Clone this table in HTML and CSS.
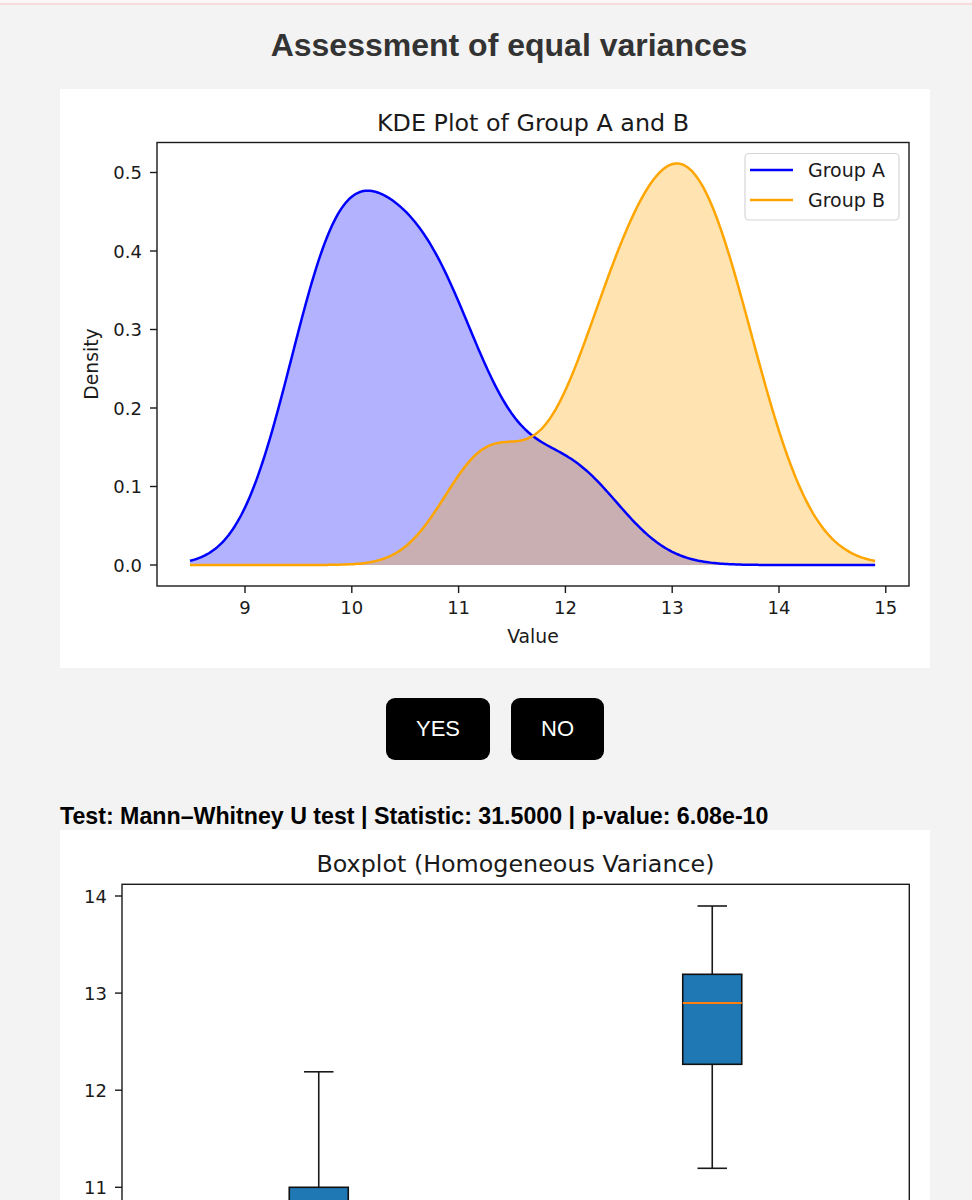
FILE: index.html
```html
<!DOCTYPE html>
<html lang="en">
<head>
<meta charset="utf-8">
<title>Assessment of equal variances</title>
<link rel="stylesheet" href="styles.css">
</head>
<body>
<div class="topbar"></div>
<main class="page">
  <h2 class="page-title">Assessment of equal variances</h2>

  <section class="plot-card kde-card">
    <svg class="plot" width="870" height="579" viewBox="60 89 870 579" xmlns="http://www.w3.org/2000/svg">
      <text class="plot-title" x="533" y="131">KDE Plot of Group A and B</text>

      <path id="fillA" class="fill-a" d=""/>
      <path id="fillB" class="fill-b" d=""/>
      <path id="lineA" class="line-a" d=""/>
      <path id="lineB" class="line-b" d=""/>

      <rect class="frame" x="157" y="142.5" width="752" height="443.5"/>

      <g class="ticks">
        <line x1="150" y1="565" x2="157" y2="565"/>
        <line x1="150" y1="486.5" x2="157" y2="486.5"/>
        <line x1="150" y1="408" x2="157" y2="408"/>
        <line x1="150" y1="329.5" x2="157" y2="329.5"/>
        <line x1="150" y1="251" x2="157" y2="251"/>
        <line x1="150" y1="172.5" x2="157" y2="172.5"/>
        <line x1="245" y1="586" x2="245" y2="593"/>
        <line x1="351.8" y1="586" x2="351.8" y2="593"/>
        <line x1="458.6" y1="586" x2="458.6" y2="593"/>
        <line x1="565.4" y1="586" x2="565.4" y2="593"/>
        <line x1="672.2" y1="586" x2="672.2" y2="593"/>
        <line x1="779" y1="586" x2="779" y2="593"/>
        <line x1="885.8" y1="586" x2="885.8" y2="593"/>
      </g>
      <g class="tick-label ytl">
        <text x="142" y="571.5">0.0</text>
        <text x="142" y="493">0.1</text>
        <text x="142" y="414.5">0.2</text>
        <text x="142" y="336">0.3</text>
        <text x="142" y="257.5">0.4</text>
        <text x="142" y="179">0.5</text>
      </g>
      <g class="tick-label xtl">
        <text x="245" y="614">9</text>
        <text x="351.8" y="614">10</text>
        <text x="458.6" y="614">11</text>
        <text x="565.4" y="614">12</text>
        <text x="672.2" y="614">13</text>
        <text x="779" y="614">14</text>
        <text x="885.8" y="614">15</text>
      </g>
      <text class="axis-label" x="533" y="643">Value</text>
      <text class="axis-label" transform="translate(98 364) rotate(-90)">Density</text>

      <g class="legend">
        <rect class="legend-box" x="745" y="153.5" width="154" height="66.5" rx="4"/>
        <line class="line-a" x1="750" y1="170" x2="793" y2="170"/>
        <line class="line-b" x1="750" y1="200" x2="793" y2="200"/>
        <text class="legend-text" x="808" y="177">Group A</text>
        <text class="legend-text" x="808" y="207">Group B</text>
      </g>
    </svg>
  </section>

  <div class="choices">
    <button class="choice" type="button">YES</button>
    <button class="choice" type="button">NO</button>
  </div>

  <p class="stats">Test: Mann–Whitney U test | Statistic: 31.5000 | p-value: 6.08e-10</p>

  <section class="plot-card box-card">
    <svg class="plot" width="870" height="370" viewBox="60 830 870 370" xmlns="http://www.w3.org/2000/svg">
      <text class="plot-title" x="515.5" y="872.3">Boxplot (Homogeneous Variance)</text>

      <g class="whisker">
        <line x1="318.75" y1="1187.3" x2="318.75" y2="1071.8"/>
        <line x1="304" y1="1071.8" x2="333.5" y2="1071.8"/>
        <line x1="712.25" y1="974.3" x2="712.25" y2="906"/>
        <line x1="697.5" y1="906" x2="727" y2="906"/>
        <line x1="712.25" y1="1064.3" x2="712.25" y2="1168.3"/>
        <line x1="697.5" y1="1168.3" x2="727" y2="1168.3"/>
      </g>
      <rect class="box" x="289.25" y="1187.3" width="59" height="77.7"/>
      <rect class="box" x="682.75" y="974.3" width="59" height="90"/>
      <line class="median" x1="682.75" y1="1003" x2="741.75" y2="1003"/>

      <rect class="frame" x="122" y="884.3" width="787.3" height="442.7"/>

      <g class="ticks">
        <line x1="115" y1="896" x2="122" y2="896"/>
        <line x1="115" y1="993.1" x2="122" y2="993.1"/>
        <line x1="115" y1="1090.2" x2="122" y2="1090.2"/>
        <line x1="115" y1="1187.3" x2="122" y2="1187.3"/>
      </g>
      <g class="tick-label ytl">
        <text x="107" y="902.5">14</text>
        <text x="107" y="999.6">13</text>
        <text x="107" y="1096.7">12</text>
        <text x="107" y="1193.8">11</text>
      </g>
    </svg>
  </section>
</main>
<script src="script.js"></script>
</body>
</html>
```

FILE: styles.css
```css
html, body {
  margin: 0;
  padding: 0;
}

body {
  background: #f3f3f3;
  font-family: "Liberation Sans", Arial, sans-serif;
  color: #000;
}

.topbar {
  height: 3px;
  background: #fdf6f6;
  border-bottom: 2px solid #f7dcdc;
}

.page {
  padding: 0 42px 0 60px;
}

.page-title {
  margin: 22px 0 25px;
  padding-left: 28px;
  font-size: 32px;
  line-height: 37px;
  font-weight: bold;
  text-align: center;
  color: #333;
}

.plot-card {
  background: #fff;
}

.kde-card {
  height: 579px;
}

.box-card {
  height: 370px;
  margin-top: 2px;
}

.plot {
  display: block;
}

.plot-title {
  font-family: "DejaVu Sans", sans-serif;
  font-size: 23.8px;
  fill: #1a1a1a;
  text-anchor: middle;
}

.axis-label {
  font-family: "DejaVu Sans", sans-serif;
  font-size: 18.8px;
  fill: #1a1a1a;
  text-anchor: middle;
}

.tick-label {
  font-family: "DejaVu Sans", sans-serif;
  font-size: 18px;
  fill: #1a1a1a;
}

.ytl {
  text-anchor: end;
}

.xtl {
  text-anchor: middle;
}

.legend-text {
  font-family: "DejaVu Sans", sans-serif;
  font-size: 19px;
  fill: #1a1a1a;
}

.frame {
  fill: none;
  stroke: #1a1a1a;
  stroke-width: 1.4;
}

.ticks line {
  stroke: #1a1a1a;
  stroke-width: 1.4;
}

.fill-a {
  fill: #0000ff;
  fill-opacity: 0.3;
}

.fill-b {
  fill: #ffa500;
  fill-opacity: 0.3;
}

.line-a {
  fill: none;
  stroke: #0000ff;
  stroke-width: 2.5;
  stroke-linejoin: round;
}

.line-b {
  fill: none;
  stroke: #ffa500;
  stroke-width: 2.5;
  stroke-linejoin: round;
}

.legend-box {
  fill: #fff;
  fill-opacity: 0.8;
  stroke: #d6d6d6;
  stroke-width: 1.2;
}

.box {
  fill: #1f77b4;
  stroke: #111;
  stroke-width: 1.6;
}

.median {
  stroke: #ff7f0e;
  stroke-width: 1.8;
}

.whisker line {
  stroke: #1a1a1a;
  stroke-width: 1.6;
}

.choices {
  display: flex;
  justify-content: center;
  gap: 21px;
  margin-top: 30px;
}

.choice {
  background: #000;
  color: #fff;
  border: 0;
  border-radius: 9px;
  padding: 18px 30px;
  font-family: "Liberation Sans", Arial, sans-serif;
  font-size: 22px;
  line-height: 26px;
  cursor: pointer;
}

.stats {
  margin: 44px 0 0;
  font-size: 23.2px;
  line-height: 24px;
  font-weight: bold;
  color: #000;
}
```

FILE: script.js
```javascript
(function () {
  // axis mapping (page pixels)
  var X0 = 245, XS = 106.8;   // x = X0 + (v - 9) * XS
  var Y0 = 565, YS = 785;     // y = Y0 - d * YS
  var V_MIN = 8.485, V_MAX = 14.9;

  // points read off the reference curves, in pixels
  var pixA = [
    [190, 560], [206.7, 550], [226.7, 533], [246.7, 503], [260, 470],
    [273.3, 430], [286.7, 380], [300, 325], [313.3, 277], [326.7, 233],
    [343.3, 206], [368.3, 195], [393, 201], [415, 218], [440, 262],
    [463.3, 315], [480, 355], [496.7, 386], [513.3, 413], [530, 434],
    [546.7, 446.7], [563.3, 455], [583.3, 468], [610, 493], [633.3, 520],
    [656.7, 543], [676.7, 556], [700, 562.5], [733, 564.3], [800, 564.6],
    [875, 564.7]
  ];

  var pixB = [
    [190, 564.7], [300, 564.6], [350, 563.3], [380, 558.3], [406.7, 543.3],
    [430, 520], [450, 490], [463.3, 468.3], [480, 450], [496.7, 443.3],
    [516.7, 441.7], [530, 436.7], [543.3, 426.7], [556.7, 410], [570, 380],
    [583.3, 343.3], [596.7, 306.7], [611.7, 270], [640, 203.3], [656.7, 173.3],
    [673.3, 162.7], [690, 170], [710, 203.3], [733.3, 266.7], [763.3, 380],
    [776.7, 423.3], [793.3, 470], [810, 506.7], [826.7, 533.3], [846.7, 553.3],
    [875, 562.7]
  ];

  function toData(pix) {
    return pix.map(function (p) {
      return [9 + (p[0] - X0) / XS, (Y0 - p[1]) / YS];
    });
  }

  function model(p, v) {
    var s = 0;
    for (var k = 0; k < p.length; k += 3) {
      var z = (v - p[k]) / p[k + 1];
      s += p[k + 2] * Math.exp(-0.5 * z * z);
    }
    return s;
  }

  function loss(p, data) {
    var L = 0;
    for (var i = 0; i < data.length; i++) {
      var e = model(p, data[i][0]) - data[i][1];
      L += e * e;
    }
    for (var k = 0; k < p.length; k += 3) {
      if (p[k + 1] < 0.15 || p[k + 2] < 0) L += 1e3;
    }
    return L;
  }

  function fit(p, data) {
    var step = p.map(function (x, i) { return i % 3 === 2 ? 0.02 : 0.05; });
    var best = loss(p, data);
    for (var it = 0; it < 20000; it++) {
      var improved = false;
      for (var i = 0; i < p.length; i++) {
        for (var s = -1; s <= 1; s += 2) {
          var q = p.slice();
          q[i] += s * step[i];
          var l = loss(q, data);
          if (l < best) { best = l; p = q; improved = true; break; }
        }
      }
      if (!improved) {
        step = step.map(function (x) { return x / 2; });
        if (step[0] < 1e-6) break;
      }
    }
    return p;
  }

  function curve(p) {
    var pts = [];
    var n = 320;
    for (var i = 0; i <= n; i++) {
      var v = V_MIN + (V_MAX - V_MIN) * i / n;
      var d = Math.max(0, model(p, v));
      pts.push([X0 + (v - 9) * XS, Y0 - d * YS]);
    }
    return pts;
  }

  function line(pts) {
    return pts.map(function (p, i) {
      return (i ? 'L' : 'M') + p[0].toFixed(2) + ',' + p[1].toFixed(2);
    }).join(' ');
  }

  function area(pts) {
    var last = pts[pts.length - 1];
    return line(pts) + ' L' + last[0].toFixed(2) + ',' + Y0 + ' L' + pts[0][0].toFixed(2) + ',' + Y0 + ' Z';
  }

  var pA = fit([10.05, 0.55, 0.40, 10.9, 0.5, 0.15, 12.0, 0.47, 0.13], toData(pixA));
  var pB = fit([13.0, 0.45, 0.5, 11.35, 0.35, 0.14, 12.3, 0.4, 0.08], toData(pixB));

  var cA = curve(pA);
  var cB = curve(pB);

  document.getElementById('lineA').setAttribute('d', line(cA));
  document.getElementById('fillA').setAttribute('d', area(cA));
  document.getElementById('lineB').setAttribute('d', line(cB));
  document.getElementById('fillB').setAttribute('d', area(cB));
})();
```
